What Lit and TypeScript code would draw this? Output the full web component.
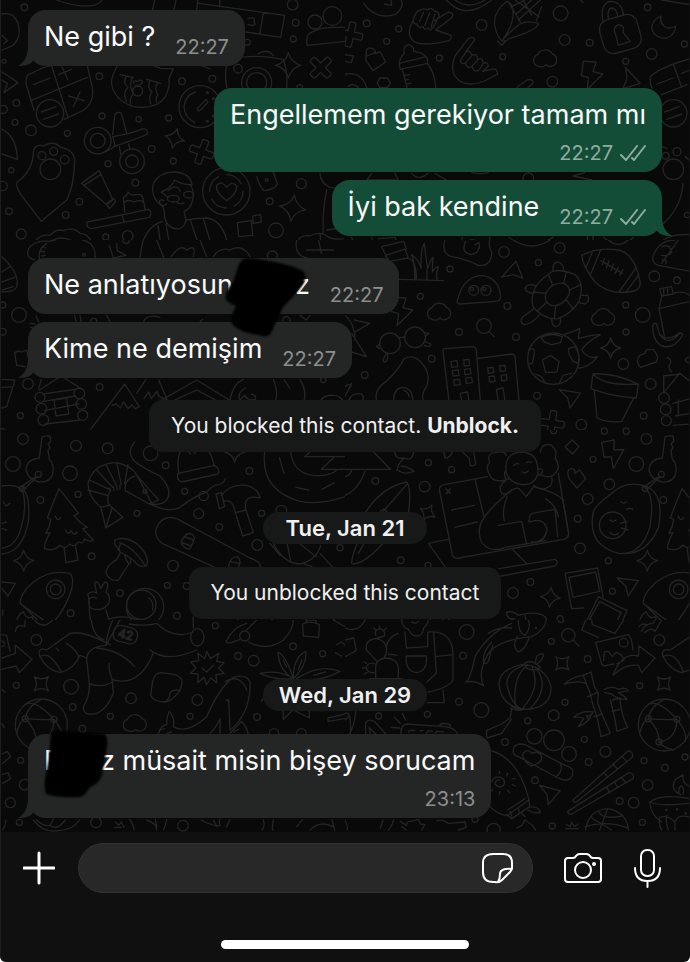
import { LitElement, html, svg, css, nothing } from "lit";
import { customElement, property } from "lit/decorators.js";

type Dot = [number, number, number];

/* ---------- wallpaper doodles ---------- */

const sparkle = (x: number, y: number, r: number, turn = 0) => svg`
  <path transform="translate(${x} ${y}) rotate(${turn})"
    d="M0 ${-r}Q${r * 0.2} ${-r * 0.2} ${r} 0Q${r * 0.2} ${r * 0.2} 0 ${r}Q${-r * 0.2} ${r * 0.2} ${-r} 0Q${-r * 0.2} ${-r * 0.2} 0 ${-r}Z"/>`;

const cross = (x: number, y: number, turn: number) => svg`
  <path transform="translate(${x} ${y}) rotate(${turn})"
    d="M-9-34Q-10-38-5-38H5Q10-38 10-33V-10H33Q37-10 37-5V5Q37 10 32 10H10V32Q10 37 5 37H-5Q-10 37-10 32V10H-33Q-37 10-37 5V-5Q-37-10-32-10H-10Z"/>`;

const cloud = (x: number, y: number) => svg`
  <path transform="translate(${x} ${y})"
    d="M-26 20A18 18 0 0 1-22-12A25 25 0 0 1 22-14A19 19 0 0 1 26 20Q10 28 4 18Q-8 30-26 20Z"/>`;

const bolt = (x: number, y: number, turn = 0) => svg`
  <path transform="translate(${x} ${y}) rotate(${turn})"
    d="M-30-38L8-42L4-12L34-10L-4 44L-6 8L-28 6Z"/>`;

const dart = (x: number, y: number, turn = 0) => svg`
  <path transform="translate(${x} ${y}) rotate(${turn})"
    d="M-32-22L32-14L2 32L-6 2Z"/>`;

const calculator = svg`
  <path d="M95 220Q140 196 155 198M262 198L277 262Q284 318 236 338L192 358M102 330L78 252Q76 220 95 220"/>
  <path d="M155 198L204 352M92 302L262 232M100 254L150 234M176 224L214 208M186 200L204 240M206 288L252 302M240 276L220 320"/>
  <circle cx="150" cy="340" r="41"/><path d="M124 336L168 320M130 358L176 342"/>`;

const globe = svg`
  <circle cx="124" cy="315" r="78"/>
  <path d="M78 252Q110 240 162 298Q196 340 186 364M76 296Q110 330 108 366Q122 384 152 390M162 298Q120 300 76 296M50 340Q60 300 76 296Q80 260 124 238M108 366Q160 360 162 298"/>
  <circle cx="76" cy="296" r="9"/><circle cx="162" cy="298" r="9"/><circle cx="108" cy="366" r="9"/>`;

const keyring = svg`
  <path d="M118 84L126 22Q130 16 150 18L152 34L144 42L150 52L144 62L148 88Q164 104 158 132Q150 158 118 156Q84 150 78 120Q80 88 118 84Z"/>
  <circle cx="115" cy="133" r="9"/><path d="M112 140L74 176L64 170L104 142"/><circle cx="66" cy="176" r="8"/>`;

const avocado = svg`
  <path d="M-166 246Q-160 226-110 190Q-70 150-10 168Q48 190 30 290Q-6 380-90 370Q-186 346-166 246Z" transform="translate(-124 0)"/>
  <path d="M-140 170Q-104 190-120 290Q-146 374-206 370"/>
  <circle cx="-232" cy="286" r="40"/>
  <path d="M-208 214Q-200 224-192 216M-190 238Q-180 232-172 238M-240 270Q-232 278-222 270M-240 308Q-228 320-214 310M-208 280L-188 274M-206 294L-186 300"/>`;

const rocket = svg`
  <path d="M152 586L60 520Q60 490 100 456Q150 418 208 430Q224 440 214 480Q196 540 152 586Q136 594 124 582L66 524M152 586"/>
  <circle cx="167" cy="478" r="28"/><circle cx="167" cy="478" r="16"/>
  <path d="M70 545Q44 560 52 596Q66 580 74 600Q72 574 90 590Q104 570 96 560Q80 570 70 545Z"/>`;

const pine = svg`
  <path d="M177 176Q196 200 236 250L222 256Q236 276 262 292L248 296L280 330Q268 338 254 326Q250 344 234 336Q224 354 208 342Q196 360 180 346Q160 366 134 356Q132 340 150 308L138 310Q150 290 152 268L142 264Q158 220 177 176ZM192 352L198 398L234 390L226 346M166 258Q172 278 182 262M196 300Q206 318 214 302Q222 320 232 306"/>`;

const paw = svg`
  <path d="M100 455Q104 430 130 438Q160 420 182 442Q224 450 224 484Q222 560 200 600L124 664L60 580Q44 552 52 546Q100 510 100 455Z"/>
  <circle cx="151" cy="508" r="31"/><circle cx="126" cy="467" r="12"/><circle cx="161" cy="454" r="12"/><circle cx="194" cy="479" r="13"/>`;

/* Each sheet covers one part of the wallpaper and has its own origin. */
const sheets = [
  {
    x: 0, y: 0,
    dots: [[73, 22, 10], [887, 68, 10], [880, 117, 9], [878, 14, 16], [742, 127, 9], [298, 229, 10], [546, 244, 10], [637, 236, 10], [49, 309, 10], [45, 367, 9], [93, 391, 16], [306, 348, 9], [416, 358, 8], [506, 354, 9], [202, 400, 9], [455, 447, 10], [520, 483, 9], [324, 491, 9], [406, 548, 10], [34, 511, 8], [238, 605, 10], [27, 634, 10], [197, 645, 10], [64, 702, 15], [317, 711, 9], [383, 708, 16], [904, 551, 15], [809, 604, 10], [828, 691, 22], [714, 206, 13], [945, 66, 21], [997, 48, 28], [899, 262, 8], [12, 184, 6], [10, 328, 12], [8, 558, 14]] as Dot[],
    art: svg`
      ${calculator}${paw}
      ${sparkle(524, 415, 30, 15)}${sparkle(865, 196, 38, 0)}${sparkle(878, 624, 40, 8)}
      ${cross(605, 456, 20)}${cross(962, 203, 45)}
      <path d="M6 42Q40 34 54 70Q66 110 40 136L6 150M6 106L22 122L10 132M6 216L54 248L12 278L22 250L6 240M6 388Q50 410 52 478L6 462"/>
      <path d="M170 0Q230 24 280 16Q300 12 306 0M464 0L458 28M528 0L522 28M594 0L590 28M596 10L854 46L842 112L738 96M790 38L780 100M660 0L658 20M744 56Q768 48 762 66Q774 80 744 74"/>
      <path d="M352 198Q336 224 334 246Q340 300 400 320Q470 330 496 290Q512 256 506 238L520 206L484 206L462 198M360 224L400 232M440 238L482 250M378 230Q368 250 384 262Q366 280 380 304M396 234Q386 260 400 280Q386 300 392 312M450 242Q440 262 456 276Q444 290 452 312M472 250Q462 266 474 284Q464 300 470 306"/>
      <circle cx="413" cy="273" r="15"/><path d="M402 252Q396 240 412 244Q426 236 428 246Q420 258 408 256"/>
      <circle cx="600" cy="320" r="63"/><path d="M586 276Q556 286 552 320Q554 352 584 368M592 326L618 298L624 306L602 330Q592 336 592 326"/>
      <circle cx="622" cy="278" r="3"/><circle cx="640" cy="296" r="3"/><circle cx="646" cy="324" r="3"/><circle cx="640" cy="348" r="3"/><circle cx="622" cy="364" r="3"/>
      <circle cx="293" cy="422" r="40"/><circle cx="293" cy="422" r="22"/><circle cx="396" cy="484" r="37"/><circle cx="396" cy="484" r="19"/>
      <path d="M346 440L338 410Q400 400 428 386Q444 386 442 402Q430 410 340 440M338 404L344 346Q350 332 364 340L380 400M358 440L362 462M386 432L390 448M316 456L340 442"/>
      <path d="M244 550L298 512L338 598L318 612ZM252 556L302 524M320 614L342 596L346 606L328 626Z"/>
      <path d="M262 666L446 628Q458 636 448 652L274 686Q256 682 262 666M366 646L372 664M374 636L370 592Q380 590 384 576Q392 588 408 584Q424 580 428 592L436 630M372 608Q384 596 402 606Q420 598 430 606"/>
      <path d="M494 654Q494 626 486 618Q450 592 460 550Q480 514 526 516Q570 520 576 554Q550 556 524 540Q512 566 484 576M504 572Q530 548 540 574M566 554Q584 560 578 600Q570 630 552 634L558 660Q580 656 620 654Q664 660 680 720M500 612Q484 624 478 606Q480 596 492 602M494 654Q504 690 540 686Q556 676 558 660M488 664Q440 676 420 748M474 676L484 748M498 672L508 730L592 722L570 658M610 656L638 748M540 748L536 730L580 724L588 748M530 606Q540 616 552 608"/>
      <ellipse cx="520" cy="596" rx="18" ry="10"/><ellipse cx="566" cy="584" rx="15" ry="10"/><path d="M484 576L504 592"/>
      <circle cx="679" cy="574" r="71"/><circle cx="679" cy="574" r="50" stroke-dasharray="54 24"/>
      <path d="M680 602Q644 576 650 556Q666 540 680 562Q696 540 710 558Q712 580 680 602Z"/>
      <path d="M712 668L754 662L758 706L716 710ZM758 648L782 644L784 666L760 670Z"/>
      <path d="M770 530Q780 562 792 572Q826 568 832 552L820 516"/><circle cx="800" cy="540" r="4"/>
      <path d="M680 262Q670 200 690 178Q760 160 850 178Q864 220 860 264M774 162Q800 144 820 166M600 196L630 206"/><circle cx="770" cy="248" r="45"/><circle cx="770" cy="248" r="30"/>
      <path d="M922 136Q914 102 940 94Q966 82 1000 82H1035M922 136L1035 124"/>
      <path d="M960 520Q960 548 990 562L1020 566M980 570Q966 640 970 700M980 690L1020 684M890 748Q890 700 930 708Q960 690 990 714Q1010 720 1030 716M960 700L964 746"/>
      <path d="M92 748Q110 700 150 706Q170 684 190 692Q220 680 240 700Q270 700 284 748M126 748Q180 680 252 748M324 746L350 740L354 748"/>`,
  },
  {
    x: 1035, y: 0,
    dots: [[65, 70, 10], [161, 87, 9], [125, 124, 9], [283, 174, 9], [410, 75, 16], [473, 170, 9], [647, 40, 22], [659, 120, 16], [734, 128, 10], [908, 22, 10], [920, 162, 16], [842, 184, 9], [622, 245, 16], [1018, 132, 9], [550, 535, 16], [962, 467, 10], [996, 455, 12], [985, 508, 31], [1026, 645, 8], [736, 714, 9], [478, 744, 14]] as Dot[],
    art: svg`
      ${cross(16, 104, 12)}${cloud(600, 176)}${bolt(738, 226, 10)}${dart(852, 240, 40)}
      <path d="M56 10Q90 60 150 44Q180 20 168 0M118 12L140 16L138 0M304 0Q360 64 440 0M330 0Q370 30 420 0"/>
      <path d="M206 60Q180 100 206 124Q236 140 300 124Q322 124 318 106L272 90L322 52Q328 36 310 36L268 62M204 62Q212 30 228 30Q236 22 246 30Q262 20 268 34Q284 34 282 48L266 80Q256 96 250 84Q236 92 234 80Q218 86 216 72Q206 74 204 62M236 36L224 64M254 38L240 76M270 42L258 82"/>
      <path d="M330 168Q310 220 346 244Q380 262 424 240L458 222Q456 202 438 208L414 214L430 198Q428 184 414 190Q414 170 398 178Q396 158 380 166Q376 148 362 156L390 118Q382 106 368 118ZM364 154L346 182Q350 196 362 188L380 168M362 190Q366 208 380 200L398 180M382 202Q388 220 402 210L414 192"/>
      <path d="M486 4Q440 40 450 80Q456 110 470 122Q480 126 492 116Q580 90 580 70Q550 60 524 72Q500 90 474 118Q516 60 500 14ZM490 6L526 66M458 124L470 136L480 126M510 0L582 50M586 0L520 60M560 0L512 44M534 0L560 46M500 20L540 0M574 62L590 20"/>
      <path d="M64 152Q68 140 82 146Q94 150 90 160L106 156L122 186L84 212L62 180ZM66 168L90 158M0 164L26 168L18 188L0 184"/>
      <path d="M104 234L128 234L136 250L128 262H104L97 250ZM0 222Q50 214 66 264M10 260Q20 246 40 262"/>
      <path d="M178 160Q172 138 192 134Q208 140 206 154Q234 156 246 174L248 190L166 208Q156 180 178 160M162 190L244 170M172 208Q180 240 186 262M248 192Q270 220 272 262M178 226L194 224M180 240L190 238M184 252L198 250"/>
      <rect x="768" y="50" width="116" height="104" rx="30" transform="rotate(-16 826 102)"/><path d="M774 66Q764 10 796 4Q830 4 836 46M790 58Q786 26 800 24Q816 26 818 48M812 104Q800 84 820 74Q842 76 834 98L856 124L820 136Z"/>
      <path d="M948 48Q920 60 920 88Q932 118 966 114Q990 104 992 78Q972 90 956 78Q944 66 948 48ZM706 0L714 8M950 0L1035 14"/>
      <path d="M1035 176Q940 204 916 230Q914 254 922 264M986 196L1010 262M936 252L984 234M1035 210L1010 220M1026 254L950 284"/><circle cx="985" cy="340" r="41"/><path d="M959 336L1003 320M965 358L1011 342M516 262L546 240Q566 236 564 250L548 264"/>
      <path d="M80 520L66 540H160L150 520M200 520Q220 544 250 520M270 520L304 540M380 518Q406 524 430 518M684 528L720 518M684 528L740 540M1014 550Q1010 620 956 670M952 440L966 446M1020 470Q1035 480 1035 490"/>
      <path d="M20 712L34 748M80 712L92 748M100 716L150 712M150 712L160 740M352 712Q346 730 356 748M434 712Q436 730 430 748M364 732Q370 716 388 720Q400 726 396 740M492 712Q550 760 624 712M776 712Q820 750 866 712M944 730Q970 700 1035 704M950 748Q960 720 1000 722"/>`,
  },
  {
    x: 0, y: 720,
    dots: [[57, 225, 22], [8, 195, 9], [281, 244, 9], [84, 432, 16], [299, 441, 10], [61, 527, 9], [859, 241, 11], [817, 48, 15], [252, 44, 4], [970, 420, 8], [8, 574, 8], [68, 596, 14], [378, 0, 10], [8, 275, 10]] as Dot[],
    art: svg`
      <path d="M104 60Q70 50 90 20Q110 0 150 4Q220-20 270 10Q290 30 284 56M140 10Q110 30 120 64M126 20L136 24M124 34L134 36M126 48L136 46"/>
      <path d="M6 50Q60 100 50 140Q46 156 6 156M6 96L30 80M6 126L44 112M6 150L40 140M328 16L340 54L378 46L352 32L350 10M420 56Q424 20 430 0M470 0L492 56M514 50Q540 10 560 30Q590 10 580 50M600 0L620 50M640 50Q660 20 690 30Q730 10 750 50M890 0Q880 50 930 56M920 30H1000M956 0L964 40"/>
      <path d="M108 228L116 246M224 226L228 246M240 226L244 246M320 226L330 246M430 246Q440 220 480 232M600 246L608 238M900 226L918 240L930 226M90 250L104 252M92 262L100 264M44 340Q50 330 64 336L80 330L84 350M44 340L50 376L76 380"/>
      <path d="M118 450L184 408L246 448M124 418L116 446M128 462L226 448M130 484L226 468M132 512L236 492M136 552L240 540M162 480L200 474L206 522L168 528Z"/>
      <circle cx="120" cy="472" r="15"/><circle cx="124" cy="506" r="16"/><circle cx="130" cy="540" r="16"/><circle cx="238" cy="460" r="16"/><circle cx="244" cy="492" r="16"/><circle cx="248" cy="526" r="15"/>
      <path d="M6 418L44 420L40 440L6 442M38 442L20 500L6 504"/>
      <path d="M450 576H266L374 432L418 500L406 506L396 494L384 506L370 486L362 504L348 492L336 496M410 460L438 418M432 476L446 456L454 476L470 454L478 470L502 480L476 420"/>
      <path d="M482 482L590 420L688 480M516 484L590 450L654 484M690 478Q700 430 730 418M820 418Q836 460 826 484M736 444Q710 460 720 480L734 466Q744 484 766 478Q770 466 754 462M900 418Q920 450 912 484M852 418L870 446M960 484Q970 464 1000 466Q1020 466 1030 484"/>`,
  },
  {
    x: 1035, y: 720,
    dots: [[477, 36, 16], [644, 24, 16], [580, 68, 9], [315, 87, 9], [226, 169, 9], [487, 198, 10], [342, 276, 10], [513, 291, 10], [260, 356, 10], [59, 405, 10], [576, 467, 10], [709, 554, 16], [778, 573, 9], [843, 573, 9], [896, 527, 10], [917, 432, 16], [835, 372, 16], [843, 276, 9], [842, 195, 9], [893, 225, 22], [928, 109, 16], [996, 121, 10], [902, 594, 16], [1030, 360, 8]] as Dot[],
    art: svg`
      ${cloud(282, 216)}${cloud(774, 232)}${bolt(168, 214, 10)}${dart(506, 98, -55)}${dart(674, 472, 2)}${sparkle(797, 324, 30, 0)}${cross(621, 550, 8)}
      <path d="M300 0Q288 40 320 50Q360 56 400 76Q440 80 440 36Q430 20 434 0M362 4Q346 38 378 44Q400 40 402 22M390 14L402 8L404 24M504 0Q560 36 616 0M790 0Q820 26 850 0"/>
      <path d="M110 20L176 4L184 26L122 46ZM122 48L134 64L190 54L180 28M190 54Q216 66 214 118M164 118L296 122M210 118Q208 60 200 44Q222 60 228 84Q226 30 238 10Q244 60 248 86Q256 60 264 52Q262 80 262 96Q272 80 280 80Q272 100 276 118M246 90V118"/>
      <path d="M346 192Q330 190 340 172Q356 112 408 106Q462 112 467 168Q466 184 452 184Z"/><circle cx="386" cy="151" r="15"/><circle cx="423" cy="151" r="15"/><circle cx="381" cy="147" r="5"/><circle cx="418" cy="147" r="5"/>
      <path d="M566 156Q570 130 620 96Q640 84 690 104Q720 130 702 184Q680 220 640 236Q600 240 566 204Q556 180 566 156Z"/><path d="M602 160Q620 126 656 130Q680 140 672 164Q652 202 618 196Q596 184 602 160ZM602 160L566 156M622 134L610 102M656 130L664 94M674 150L708 134M664 180L686 208M632 198L628 236M606 186L576 214M624 92Q622 66 640 66Q656 72 656 90M566 160Q538 158 542 142Q550 128 574 138M566 206L532 232Q522 248 538 254Q558 254 584 224M620 236Q620 260 634 260Q650 254 646 234M706 166L728 166Q736 184 720 192L700 188"/>
      <path d="M710 46Q760 20 820 30Q870 40 886 130Q884 154 850 156Q790 164 750 126Q712 76 710 46ZM744 32L724 80M768 28L736 104M874 82L822 156M882 104L842 158M768 62L832 100M778 56L772 74M792 62L784 84M806 72L798 92M820 82L810 100M834 88L824 106"/>
      <path d="M990 0Q940 0 924 50Q920 70 940 76L1035 94M1000 0L950 70M950 20Q976 10 980 36Q970 50 950 46M952 60Q968 56 962 72"/>
      <path d="M944 146L980 140L984 162L950 168ZM956 146V162M968 144V160M950 170L942 206L1035 184M942 206L958 288M984 160Q1020 150 1035 168"/>
      <path d="M924 252Q920 300 950 318Q990 330 1014 282L1004 278Q970 306 944 284L934 250ZM944 284Q970 320 1004 280"/>
      <circle cx="417" cy="258" r="22"/><path d="M432 274L447 290"/>
      <circle cx="135" cy="310" r="31"/><circle cx="210" cy="292" r="31"/><path d="M162 294L180 290M104 314L94 320L104 326M124 342Q108 364 120 366Q130 362 128 344M240 278L252 280L242 288M238 304L258 312Q258 324 238 316"/>
      <path d="M0 226Q30 250 30 300M28 240L74 250L30 276M20 280L64 350L20 336"/>
      <path d="M96 484Q84 450 124 424Q160 390 176 358Q194 344 216 356Q260 390 246 436Q226 466 236 484"/><path d="M146 480Q146 444 174 442Q202 446 204 480M176 452Q192 456 192 470M0 470L20 430M10 484Q20 456 50 462Q60 474 50 484M0 440Q14 426 18 440"/>
      <path d="M312 484L294 334Q292 328 300 326L382 320Q392 320 394 330L406 484M396 356L500 342Q508 342 510 350L522 484M318 364L336 362L338 380L320 382ZM356 360L372 358L374 376L358 378ZM322 392L340 390L342 406L324 408ZM358 388L376 386L378 402L360 404ZM326 420L344 418L346 434L328 436ZM362 414L380 412L382 428L364 430ZM428 384L444 382L446 398L430 400ZM464 378L480 376L482 392L466 394ZM432 410L448 408L450 424L434 426ZM468 406L484 404L486 420L470 422ZM350 484L346 460L368 456L372 484M460 484L454 448L474 444L480 484"/>
      <circle cx="625" cy="356" r="77"/><path d="M592 360L616 346L642 364L636 396L602 398ZM588 292Q620 276 652 290L646 308L620 314L598 306ZM670 326L690 320Q706 340 700 370L684 364L672 342ZM552 330Q570 320 568 340L562 370L550 372M570 402L590 410L600 428M644 428L654 406L680 400M660 282Q690 274 704 266L700 296Q740 284 766 284Q720 310 710 330Q730 360 758 350Q730 384 700 384"/>
      <path d="M744 402Q800 396 880 432L874 474Q800 470 738 446ZM744 402Q780 440 880 432M748 450L756 534Q790 550 830 544L866 474"/>
      <path d="M884 346L900 340Q902 326 912 330Q930 322 938 352L934 366L886 382Q870 366 884 346M966 352Q984 360 974 374Q968 386 980 396M956 456V408L1006 402M956 458L1004 400L1035 424M984 490L1035 476M992 528L1035 520M984 556L1035 552M1000 480V526"/>
      <circle cx="957" cy="474" r="16"/><circle cx="962" cy="508" r="16"/><circle cx="964" cy="542" r="15"/>`,
  },
  {
    x: 0, y: 1290,
    dots: [[69, 27, 16], [39, 102, 22], [228, 47, 16], [210, 130, 22], [323, 55, 16], [234, 193, 9], [121, 210, 10], [452, 70, 22], [497, 106, 10], [554, 184, 9], [611, 198, 14], [411, 250, 9], [596, 251, 15], [658, 291, 10], [748, 123, 10], [785, 250, 9], [844, 242, 16], [772, 345, 16], [519, 407, 16], [275, 379, 10], [502, 466, 9], [360, 489, 10], [560, 468, 10], [212, 550, 10], [531, 557, 10], [646, 586, 9], [1020, 353, 9]] as Dot[],
    art: svg`
      ${keyring}${pine}${rocket}${sparkle(71, 392, 31)}${sparkle(704, 66, 30, 0)}
      <path d="M6 168Q60 160 70 190Q80 240 64 290Q50 350 6 354M6 372Q70 366 86 270Q90 190 66 176M10 216L18 228L30 220M6 280L20 276M6 296L20 300"/>
      <path d="M6 456L46 460L24 498L6 476M8 540V556"/>
      <path d="M318 294L302 232Q264 200 264 160Q280 100 350 98Q400 110 410 136L476 210L448 222L376 182Q370 150 404 138M302 232L326 226Q320 200 328 186M328 224L368 262L318 294L336 234M264 180L322 196M268 150L328 178M290 120L338 172M318 104L350 168M350 98L364 164M384 104L374 160M412 138L456 222M328 174L332 184M340 170L342 182M350 168L352 180M360 166L360 178"/><circle cx="435" cy="184" r="6"/>
      <path d="M404 36Q380 66 400 90Q420 110 480 138Q520 180 500 210Q480 230 448 220Q500 250 540 232Q580 200 620 186Q640 164 656 164Q672 160 676 146"/>
      <path d="M540 66Q530 90 536 126M628 66Q640 90 642 108M534 130L644 106Q662 118 654 132L544 156Q528 148 534 130M566 66L572 72M580 64L586 70"/>
      <path d="M648 192L664 188L674 230L658 236ZM664 196Q690 160 740 166Q776 176 780 204Q746 196 738 214Q734 230 738 240L760 308L728 318L706 248L700 226Q690 208 670 214M706 248L738 240"/>
      <path d="M640 410L486 340Q456 316 474 284Q494 254 530 266L750 384Q780 394 782 410M686 410Q690 380 712 380Q726 390 716 410M690 394L716 400M552 350Q540 340 546 330L560 312Q578 306 584 324L572 354Q562 362 552 350M552 320L580 330M546 338L574 348"/>
      <path d="M344 330Q380 316 416 346Q450 380 440 406Q420 416 404 394L382 378L360 366L344 342ZM358 338Q400 350 436 408M360 366Q354 350 362 344M374 374Q376 388 386 402Q394 400 392 386M360 370L350 388Q316 410 318 430Q330 456 356 450Q374 420 386 404"/>
      <path d="M268 540Q268 510 264 492Q278 480 290 490L284 460Q292 446 302 476L314 456Q330 456 318 486Q334 500 326 520Q310 542 290 538Q262 540 266 508Q280 496 290 506M268 540L274 600M318 540L330 580M330 566Q380 552 420 574M340 600Q370 564 430 590"/>
      <circle cx="435" cy="531" r="56"/><circle cx="424" cy="524" r="44"/><path d="M446 504Q462 514 458 540"/>
      <path d="M794 66Q780 180 900 214Q960 226 1035 200M872 66Q880 130 940 136Q990 140 1010 120M914 80H1035M914 80L930 66M964 118H1035M964 118L1000 84M838 82L852 130M888 172L926 180M966 178L1004 158"/>
      <path d="M810 340L840 376M820 340Q850 400 900 402Q950 390 962 346M862 342L872 394M900 342L948 380M908 400L936 410M960 370L996 410M580 600V560M714 600V564M820 564L790 598M920 564L910 600M870 580Q890 590 880 600M940 570L960 600M1000 564Q1010 590 1035 596"/>`,
  },
  {
    x: 1035, y: 1290,
    dots: [[250, 98, 9], [320, 119, 9], [91, 153, 10], [239, 170, 16], [167, 391, 10], [249, 406, 9], [556, 456, 10], [504, 489, 16], [645, 566, 9], [705, 355, 16], [790, 392, 9], [802, 484, 9], [698, 266, 10], [728, 207, 16], [793, 163, 16], [744, 88, 9], [874, 102, 22], [904, 27, 16], [955, 210, 10], [778, 4, 9], [844, 4, 9], [626, 2, 9], [303, 570, 9]] as Dot[],
    art: svg`
      <g transform="translate(834 0)">${keyring}${pine}${rocket}</g><g transform="translate(1035 0)">${avocado}</g>
      ${sparkle(248, 248, 26, 30)}${sparkle(616, 502, 30, 5)}${sparkle(907, 392, 31)}${bolt(804, 72, -6)}${dart(848, 466, 0)}
      <path d="M682 30L702 50L682 72L660 50ZM670 138Q664 118 680 116Q692 118 690 130L704 120L722 146L696 174L674 148Z"/>
      <path d="M86 66L136 118H0M0 196Q40 180 60 124M20 120Q16 136 0 140M150 66Q150 90 180 84Q200 96 206 66M180 84Q160 96 156 120Q180 136 206 124Q190 110 168 108M296 66L300 84Q316 84 322 66M352 66L372 84L376 106Q390 110 392 100L386 66"/>
      <path d="M20 400Q20 380 38 336M60 250Q110 170 186 156Q200 180 190 250M24 402Q60 400 112 342M40 370L56 342M110 250L188 160M106 244L116 236L128 248"/>
      <path d="M428 140L298 164Q280 168 284 184L322 374Q326 388 342 384L656 328Q674 322 670 306L640 130M390 148L416 256M320 240L388 226M330 292L396 276M302 176L316 190M316 176L304 192M310 328L250 340L300 410M504 360L546 402M462 416L630 388Q644 396 630 408L468 438"/>
      <path d="M484 150Q440 160 432 130Q420 110 434 98Q424 70 450 68Q480 60 484 76M484 150Q456 170 470 190Q490 196 500 180M586 66Q590 40 616 44Q640 60 630 84Q650 110 630 130Q620 146 588 136M566 166Q590 186 616 168Q626 150 618 138"/>
      <path d="M484 130Q474 66 534 66Q584 72 578 134Q566 166 532 164Q496 160 484 130ZM484 120Q474 130 482 146L492 148M578 120Q594 110 592 128Q588 136 578 134M506 106Q514 98 522 102M544 98Q552 92 560 98M532 126Q544 132 550 122"/>
      <path d="M500 180Q520 170 524 178L544 200L566 170Q640 190 654 210L670 306M500 180Q440 230 420 258Q390 300 412 340Q440 370 480 352L602 332M486 200Q470 240 478 272M460 286L530 274L544 338M552 276Q550 250 572 248L630 238L638 320M602 206Q636 230 640 260M552 276Q600 260 606 300Q598 340 560 336"/>
      <path d="M660 430L758 414L774 500M660 430L680 536L716 534M672 442L752 426L764 484L684 502ZM760 500L846 542L820 600M760 500L712 600M764 514L828 548L806 596M764 514L734 568L806 596"/>
      <path d="M484 548Q500 540 520 556Q580 540 604 564Q600 590 580 600M484 548Q486 570 510 566Q470 580 450 600M540 556L550 600M0 596Q60 600 60 566M170 566Q180 600 210 596Q250 600 256 566M96 600L108 590L116 600M200 576L206 580M330 600Q360 572 390 600"/>`,
  },
  {
    x: 0, y: 1860,
    dots: [[109, 60, 16], [49, 196, 9], [213, 200, 22], [218, 261, 10], [247, 326, 10], [331, 289, 9], [393, 235, 16], [570, 289, 9], [592, 240, 16], [714, 108, 10], [761, 122, 16], [771, 291, 10], [879, 79, 10], [968, 101, 9], [646, 17, 9], [822, 340, 14], [62, 421, 9], [74, 494, 16], [31, 548, 15], [58, 607, 9], [288, 607, 16], [549, 617, 16], [904, 340, 14]] as Dot[],
    art: svg`
      ${globe}${cloud(404, 310)}${sparkle(124, 191, 30, 45)}
      <path d="M6 114L46 100V76L96 118L58 158L48 138L6 148M6 44L20 46L30 94M6 62L14 70M6 80L14 76M104 0Q130 30 158 0M46 34Q50 10 74 20L76 0"/>
      <path d="M120 110Q110 80 140 90L210 40Q250 30 330 74M120 110Q140 150 180 158Q220 150 240 106L260 114M120 110Q150 90 184 156M168 84L176 92M200 70Q230 90 236 110M274 0Q280 50 310 58M338 0Q320 40 318 76L360 0M318 76Q260 80 260 120L268 190Q270 230 250 260Q250 290 290 280Q320 270 340 220L336 176Q324 150 328 130M270 192Q310 204 338 186M290 84Q360 90 404 140M340 180Q420 200 460 98M450 90Q500 130 590 90M388 12Q440 20 470 10Q520 60 580 36M580 24V0"/>
      <rect x="340" y="20" width="72" height="48" rx="20" transform="rotate(14 376 44)"/><ellipse cx="592" cy="52" rx="20" ry="26"/>
      <text x="354" y="56" transform="rotate(14 376 44)" font-size="36">42</text>
      <path d="M620 94L632 116L656 100L650 124L672 128L656 144L672 160L648 164L650 188L632 174L620 194L612 172L594 188L594 162L572 160L588 144L572 126L596 122L594 100L614 116ZM606 144L620 156L640 136"/>
      <path d="M458 184Q464 158 484 158L526 164Q548 172 546 190L540 212Q510 250 490 246Q456 244 452 224ZM540 212Q520 206 510 218Q510 240 492 246"/>
      <path d="M678 64Q700 20 740 10M678 64Q680 76 720 58M746 66Q800 96 850 60Q880 30 880 0M740 30L770 0"/><circle cx="734" cy="48" r="15"/>
      <path d="M908 12Q930 0 958 14L956 52L910 48ZM918 8L920 0H948V10M1000 0L1035 20M1010 74L1024 66L1035 76M1006 98L1024 108"/>
      <path d="M880 176Q836 150 834 96Q860 110 880 176Q880 110 918 94Q920 140 880 176M880 176Q820 180 780 160Q830 150 866 168M890 176Q960 130 1020 154Q980 176 940 178M850 120L860 142M906 120L894 150M940 166L976 156M850 270V298L876 272M880 270L928 294V270M784 244L790 236M984 294L1035 282M984 304L1035 296M984 294V304M960 272H976"/>
      <path d="M476 340Q480 318 500 314Q500 290 508 274Q526 296 520 320Q560 344 620 290Q660 200 700 172Q740 160 750 186Q752 220 740 260Q720 310 690 330M676 184Q720 160 740 210M690 330L686 240M630 340Q650 320 660 296M660 340V300M690 340Q710 320 724 304Q740 320 744 340M700 336L716 328M480 330L494 326M500 340L514 336"/><circle cx="682" cy="240" r="2"/>
      <path d="M6 402L22 394L32 410L8 430M6 464L24 458L32 476L8 490M6 208L14 216M6 310L12 322"/>
      <path d="M8 630Q20 610 16 600M100 600Q130 640 176 632Q220 630 238 600M110 600Q130 620 150 616Q160 600 160 596M150 616Q170 634 196 600M346 606L356 616L364 606L372 622M344 622H364M388 598Q400 610 402 630M440 600Q470 610 470 630M466 598L470 620M500 598Q496 620 490 630M604 600Q640 620 660 616Q656 600 660 598M640 600L650 620M680 620L690 598M790 600Q796 620 786 630M820 600Q816 620 818 630M890 620L908 598M930 630Q960 600 1000 620M996 598L1004 630"/>`,
  },
  {
    x: 1035, y: 1860,
    dots: [[365, 36, 22], [354, 107, 10], [342, 245, 10], [409, 270, 22], [247, 283, 9], [101, 288, 9], [619, 64, 9], [728, 117, 10], [660, 247, 9], [626, 286, 16], [548, 302, 9], [480, 366, 10], [568, 349, 23], [627, 361, 31], [672, 402, 22], [718, 358, 9], [781, 395, 16], [731, 426, 10], [570, 481, 10], [824, 543, 10], [866, 548, 16], [908, 495, 16], [897, 422, 9], [960, 443, 10], [1020, 411, 9], [884, 197, 9], [943, 60, 16], [892, 607, 9], [622, 618, 9], [390, 598, 9], [446, 630, 20], [836, 68, 13], [648, 0, 8]] as Dot[],
    art: svg`
      <g transform="translate(834 0)">${globe}</g>
      ${sparkle(652, 130, 28, 45)}${sparkle(957, 191, 28, 45)}${dart(612, 522, 8)}
      <circle cx="670" cy="46" r="20"/><path d="M684 60L702 78"/>
      <path d="M752 68L850 44Q860 50 864 90M752 68L770 132Q776 140 786 136L806 132M776 122L778 96L790 94L802 110L814 96L830 106L838 120L814 132M804 166Q830 96 880 108L882 78L930 114L890 158L880 136Q840 130 804 166M710 30L722 0M710 30L760 52M740 0L742 14L810 40L836 0M882 20Q890 8 906 14M890 34Q900 10 924 10L930 0M898 38Q920 20 930 34L950 0M954 110Q946 84 976 90L1035 50M954 110Q976 150 1010 158L1035 150M954 110Q990 90 1016 156"/>
      <path d="M0 24Q40 40 60 0M0 60L26 54L34 92L0 110M170 0Q170 20 190 28Q200 50 216 48Q234 48 236 24Q250 10 250 0M200 6Q210 14 220 4M180 36L184 84L248 80V38M266 38L274 160L246 186M160 40Q130 50 124 80M250 36Q320 30 324 100V180Q310 204 250 216M130 102L156 106M270 110L324 104M184 108H244Q250 150 216 158Q180 154 184 108M294 210L298 248H246"/>
      <path d="M90 56Q60 60 64 90L96 124M90 56Q130 60 124 100L116 116M92 176V140Q94 116 124 114Q154 116 160 140V176M76 176H172M92 46Q88 30 104 26Q124 34 118 48L96 54M104 26V18M118 30L124 24M92 30L86 24M90 132Q70 124 64 142Q66 160 88 158M64 130L58 126M60 144H52M66 158L58 162"/>
      <path d="M362 186Q376 180 390 110Q430 40 500 10M362 186Q390 180 416 198Q396 160 430 100Q460 60 560 50Q600 30 604 0M430 40Q460 20 500 24M416 128Q410 100 440 66M416 128Q430 140 436 100L444 76M516 50Q500 80 520 96Q540 90 552 54M520 0Q520 40 540 46Q560 20 550 0"/><circle cx="573" cy="24" r="2"/>
      <path d="M462 194Q460 150 530 134Q600 136 618 200Q620 260 550 268Q470 266 462 194ZM540 134Q470 160 490 210Q500 250 526 266M548 134Q500 170 512 262M560 138Q590 200 534 264M570 140Q620 200 556 266M538 130Q560 116 586 142Q570 158 540 142M572 128Q570 100 596 102Q594 120 576 132M494 252Q510 270 536 268Q520 276 496 264M500 268L496 290M494 294L470 312L424 332L426 354L470 340L500 296"/>
      <path d="M714 166L738 156L748 200L760 220L758 250L772 286L796 340L768 350L756 290L744 256L736 222L728 200ZM728 230L756 218M746 290L774 282M716 166Q680 170 658 192Q700 180 722 190M778 208Q800 196 822 208Q840 200 850 212L820 218Q840 230 846 238Q820 240 800 222L778 218M802 240L826 234M796 240Q810 290 816 334L848 322Q830 290 824 234M802 274L824 268M686 292Q710 270 744 276Q740 290 724 286L732 300M686 292Q710 290 716 296L700 320Q730 310 740 282"/>
      <path d="M0 280Q20 270 16 342M0 300L10 290M32 272Q30 310 14 342M62 342V308Q72 294 90 306L122 342M76 342L72 322L92 342M168 342Q166 314 186 312L300 320Q330 324 338 342M284 316Q290 306 316 314L314 322M190 336Q194 328 210 332M226 332H234M244 340L250 332L262 334M270 340L276 334L296 336M138 322L164 324M148 292L166 310M172 280L182 300"/>
      <path d="M430 390Q520 410 552 540L488 586Q470 590 432 558M552 540L554 560L500 596L484 584M488 570L540 536M500 590L496 574M524 580L520 566M552 562Q580 556 586 578Q570 582 548 570M530 580L540 590"/><path d="M464 480Q450 480 450 492Q460 506 476 496Q484 480 468 472Q446 466 440 486M464 454V460M488 460L484 468M502 476H510M502 494L512 498M488 510L494 518M464 514V522M442 508L436 516"/>
      <path d="M504 392Q508 366 540 374L660 436Q690 444 682 466Q672 490 640 474L520 410Q504 406 504 392M646 430Q656 452 632 472M558 438Q530 420 534 400Q548 384 560 400Q582 390 590 410Q592 430 558 438Z"/>
      <path d="M684 540L850 392Q866 396 862 412L694 546Q684 548 684 540M668 574L852 458Q870 460 864 476L680 582Q668 584 668 574M832 410L844 424M804 432L816 446M776 458L788 470M830 472L842 488M808 486L818 502M784 500L794 518"/>
      <path d="M914 546Q950 520 1035 536M914 546Q920 590 950 606M914 546Q940 560 1035 550M1008 524Q974 510 990 480L1014 464Q1010 490 1035 500M1002 520Q1000 500 1010 498Q1020 510 1014 522M944 592Q970 584 990 606Q1000 580 1035 592M970 630Q960 600 966 586M944 592Q940 616 950 630M990 606V630"/><circle cx="964" cy="570" r="2"/><circle cx="996" cy="568" r="2"/><circle cx="1022" cy="580" r="2"/>
      <path d="M722 630Q730 570 788 566Q846 576 850 630M740 594L800 630M760 574Q770 600 830 588M788 566L764 630M720 620Q780 600 850 624"/>
      <path d="M0 600Q10 620 6 630M146 600Q140 620 130 630M114 600L106 624M166 604L184 616Q186 600 200 604L220 598L226 612L240 614L230 630M170 620L184 630M276 602Q290 596 310 610L360 606L364 622L340 630M540 600L530 616L516 624M540 600L562 616L572 630M664 614L676 620L680 606L688 620L700 612M662 626H700"/>`,
  },
];

@customElement("chat-wallpaper")
export class ChatWallpaper extends LitElement {
  static styles = css`
    :host { display: block; overflow: hidden; }
    .doodles {
      display: block;
      width: 100%;
      height: 100%;
      fill: none;
      stroke: #242424;
      stroke-width: 4;
      stroke-linejoin: round;
      stroke-linecap: round;
      font-family: Inter, sans-serif;
    }
  `;
  render() {
    return html`<svg class="doodles" viewBox="0 0 2070 2496" preserveAspectRatio="xMidYMin slice" aria-hidden="true">
      <defs>
        ${sheets.map((s, i) => svg`<clipPath id="sheet${i}"><rect width="1035"
          height=${(sheets[i + 2]?.y ?? 2496) - s.y}/></clipPath>`)}
      </defs>
      ${sheets.map((s, i) => svg`<g transform="translate(${s.x} ${s.y})" clip-path="url(#sheet${i})">
        ${s.art}${s.dots.map(([x, y, r]) => svg`<circle cx=${x} cy=${y} r=${r}/>`)}
      </g>`)}
    </svg>`;
  }
}

/* ---------- message bubble ---------- */

@customElement("chat-bubble")
export class ChatBubble extends LitElement {
  @property({ type: Boolean, reflect: true }) sent = false;
  @property({ type: Boolean, reflect: true }) stacked = false;
  @property({ type: Boolean }) tail = false;
  @property() time = "";

  static styles = css`
    :host {
      position: relative;
      display: flex;
      align-items: flex-start;
      align-self: flex-start;
      gap: 20px;
      box-sizing: border-box;
      min-height: 56px;
      max-width: 100%;
      padding: 10px 16px 7px;
      border-radius: 18px;
      background: #242626;
      color: #fafafa;
      --meta: #8d8f8f;
    }
    :host([sent]) {
      align-self: flex-end;
      background: #144d37;
      --meta: #8fac9f;
    }
    :host([stacked]) {
      flex-direction: column;
      gap: 9px;
    }
    .text {
      font-size: 27px;
      line-height: 34px;
      white-space: nowrap;
    }
    .meta {
      display: flex;
      align-items: center;
      align-self: flex-end;
      gap: 7px;
      color: var(--meta);
      font-size: 20px;
      line-height: 24px;
    }
    :host(:not([stacked])) .meta { margin-top: 15px; }
    .ticks {
      width: 26px;
      height: 16px;
      fill: none;
      stroke: currentColor;
      stroke-width: 2;
      stroke-linecap: round;
      stroke-linejoin: round;
    }
    .tail {
      position: absolute;
      left: -10px;
      bottom: 0;
      width: 24px;
      height: 20px;
      fill: #242626;
    }
    :host([sent]) .tail {
      left: auto;
      right: -10px;
      fill: #144d37;
      transform: scaleX(-1);
    }
  `;
  render() {
    return html`
      ${this.tail
        ? html`<svg class="tail" viewBox="0 0 24 20" aria-hidden="true"><path d="M10 0C10 9 7 16 0 20C7 20 12 19 15 15L14 0Z"/></svg>`
        : nothing}
      <span class="text"><slot></slot></span>
      <span class="meta">
        <time>${this.time}</time>
        ${this.sent
          ? html`<svg class="ticks" viewBox="0 0 26 16" role="img" aria-label="Delivered">
              <path d="M1 10L6 15L17 1M12 13L14 15L25 1"/></svg>`
          : nothing}
      </span>`;
  }
}

/* ---------- screen ---------- */

@customElement("app-root")
export class AppRoot extends LitElement {
  static styles = css`
    :host {
      display: block;
      background: #fff;
      font-family: Inter, "Liberation Sans", sans-serif;
    }
    .screen {
      display: flex;
      flex-direction: column;
      box-sizing: border-box;
      min-height: 100vh;
      overflow: hidden;
      border-radius: 0 0 6px 6px;
      background: #101010;
      box-shadow: inset 1px 0 #1d1d1d;
    }
    .chat {
      position: relative;
      display: flex;
      flex: 1;
      flex-direction: column;
      gap: 22px;
      margin: 0 1px;
      padding: 10px 27px 12px;
      background: #090909;
    }
    chat-wallpaper {
      position: absolute;
      inset: 0;
    }
    .run {
      position: relative;
      display: flex;
      flex-direction: column;
      gap: 8px;
    }
    .notice, .date {
      position: relative;
      align-self: center;
      margin: 0;
      background: #171818;
      color: #f0f0f0;
      white-space: nowrap;
    }
    .notice {
      padding: 10px 22px;
      border-radius: 14px;
      font-size: 21px;
      line-height: 32px;
    }
    .date {
      box-sizing: border-box;
      min-width: 164px;
      margin: 38px 0 1px;
      padding: 0 16px;
      border-radius: 16px;
      font-size: 22px;
      font-weight: 600;
      line-height: 32px;
      text-align: center;
    }
    .link {
      padding: 0;
      border: 0;
      background: none;
      color: inherit;
      font: inherit;
      font-weight: 700;
      cursor: pointer;
    }
    .redacted {
      position: relative;
      display: inline-block;
      width: 62px;
      height: 20px;
    }
    .redacted.name {
      width: 56px;
      height: auto;
    }
    .scribble {
      position: absolute;
      z-index: 1;
      left: -10px;
      top: -19px;
      width: 86px;
      height: 84px;
      fill: #000;
      filter: blur(1px);
    }
    .name .scribble {
      left: 0;
      top: -15px;
      width: 64px;
      height: 72px;
    }
    .front { z-index: 1; }
    .composer {
      display: flex;
      align-items: center;
      padding: 11px 29px 0 23px;
    }
    .icon {
      display: flex;
      flex: none;
      padding: 0;
      border: 0;
      background: none;
      color: #fff;
      cursor: pointer;
    }
    .icon svg {
      fill: none;
      stroke: currentColor;
      stroke-linecap: round;
      stroke-linejoin: round;
    }
    .field {
      display: flex;
      flex: 1;
      align-items: center;
      box-sizing: border-box;
      min-width: 0;
      height: 50px;
      margin: 0 30px 0 23px;
      padding: 0 18px 0 22px;
      border: 1px solid #323232;
      border-radius: 25px;
      background: #282828;
    }
    .entry {
      flex: 1;
      min-width: 0;
      padding: 0;
      border: 0;
      outline: 0;
      background: none;
      color: #fff;
      font: inherit;
      font-size: 27px;
    }
    .mic { margin-left: 31px; }
    .home {
      align-self: center;
      width: 36%;
      height: 9px;
      margin: 47px 0 13px;
      border-radius: 5px;
      background: #fff;
    }
  `;

  render() {
    return html`
      <div class="screen">
        <main class="chat">
          <chat-wallpaper></chat-wallpaper>
          <div class="run"><chat-bubble tail time="22:27">Ne gibi ?</chat-bubble></div>
          <div class="run">
            <chat-bubble sent stacked time="22:27">Engellemem gerekiyor tamam mı</chat-bubble>
            <chat-bubble sent tail time="22:27">İyi bak kendine</chat-bubble>
          </div>
          <div class="run">
            <chat-bubble class="front" time="22:27">Ne anlatıyosun<span class="redacted">
              <svg class="scribble" viewBox="0 0 86 84" aria-hidden="true"><path d="M20 4Q26 2 46 6Q70 10 80 16Q86 20 78 32L68 44L60 52L48 78Q44 84 36 80Q18 78 10 70Q6 64 13 51Q0 46 3 40Q4 34 10 27L16 9Z"/></svg>
            </span>z</chat-bubble>
            <chat-bubble tail time="22:27">Kime ne demişim</chat-bubble>
          </div>
          <p class="notice">You blocked this contact. <button class="link" type="button">Unblock.</button></p>
          <p class="date">Tue, Jan 21</p>
          <p class="notice">You unblocked this contact</p>
          <p class="date">Wed, Jan 29</p>
          <div class="run">
            <chat-bubble stacked tail time="23:13"><span class="redacted name">D
              <svg class="scribble" viewBox="0 0 64 72" aria-hidden="true"><path d="M7 4Q20 0 30 3L60 5Q64 6 63 18L58 46Q56 54 46 58Q42 66 36 68Q14 69 2 65Q0 60 1 50L5 30Z"/></svg>
            </span>z müsait misin bişey sorucam</chat-bubble>
          </div>
        </main>
        <form class="composer" @submit=${(e: Event) => e.preventDefault()}>
          <button class="icon" type="button" aria-label="Attach">
            <svg width="32" height="34" viewBox="0 0 32 34" stroke-width="3"><path d="M16 2V32M1 17H31"/></svg>
          </button>
          <div class="field">
            <input class="entry" type="text" aria-label="Message">
            <button class="icon" type="button" aria-label="Stickers">
              <svg width="32" height="32" viewBox="0 0 32 32" stroke-width="2"><path d="M11 2H21Q30 2 30 11V16Q30 18 28 20L20 28Q17 31 13 30H11Q1 30 1 20V11Q1 2 11 2ZM30 17Q18 16 18 22Q18 27 16 30"/></svg>
            </button>
          </div>
          <button class="icon" type="button" aria-label="Camera">
            <svg width="40" height="32" viewBox="0 0 40 32" stroke-width="2"><path d="M5 6H10Q12 6 13 4L14 3Q15 2 17 2H23Q25 2 26 3L27 4Q28 6 30 6H35Q38 6 38 9V27Q38 30 35 30H5Q2 30 2 27V9Q2 6 5 6Z"/><circle cx="20" cy="18" r="8"/><circle cx="31" cy="12" r="1" fill="currentColor"/></svg>
          </button>
          <button class="icon mic" type="button" aria-label="Record voice message">
            <svg width="27" height="40" viewBox="0 0 27 40" stroke-width="2"><rect x="7" y="2" width="13" height="26" rx="6"/><path d="M1 20Q1 33 13.500 33Q26 33 26 20M13.500 33V39"/></svg>
          </button>
        </form>
        <div class="home"></div>
      </div>`;
  }
}
